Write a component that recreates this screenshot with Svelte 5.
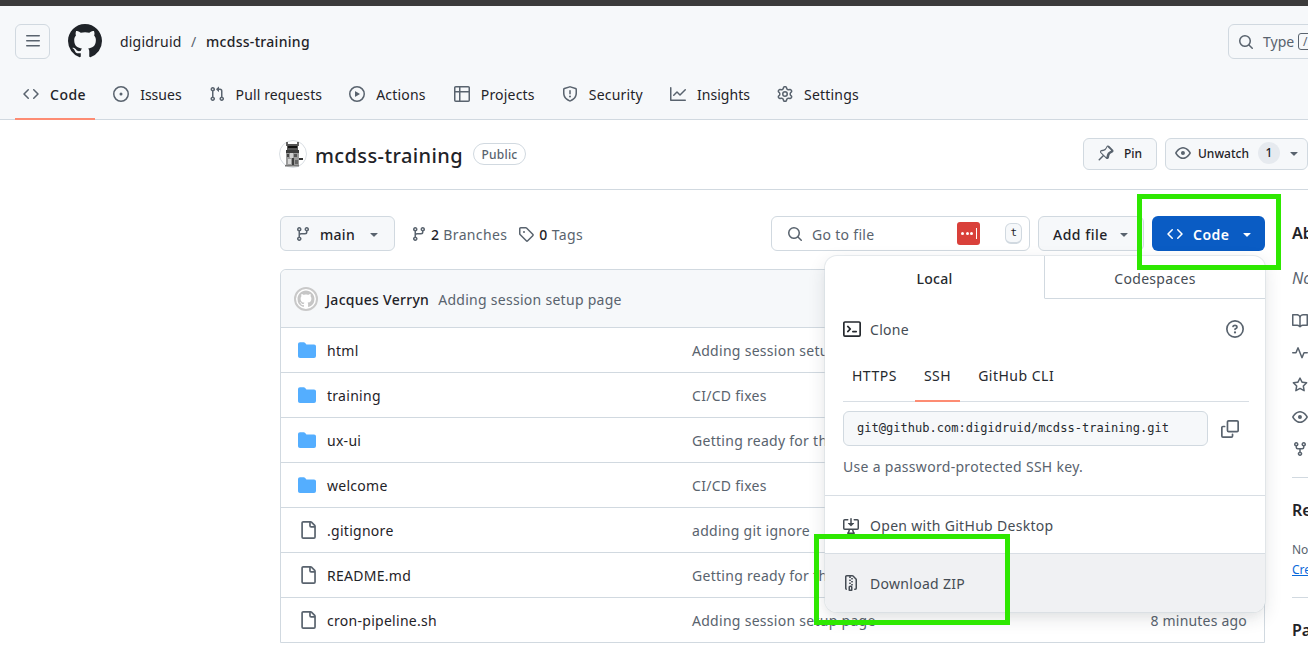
<script>
  const P = {
    bars: 'M1 2.75A.75.75 0 0 1 1.75 2h12.5a.75.75 0 0 1 0 1.5H1.75A.75.75 0 0 1 1 2.75Zm0 5A.75.75 0 0 1 1.75 7h12.5a.75.75 0 0 1 0 1.5H1.75A.75.75 0 0 1 1 7.75ZM1.75 12h12.5a.75.75 0 0 1 0 1.5H1.75a.75.75 0 0 1 0-1.5Z',
    mark: 'M8 0c4.42 0 8 3.58 8 8a8.013 8.013 0 0 1-5.45 7.59c-.4.08-.55-.17-.55-.38 0-.27.01-1.13.01-2.2 0-.75-.25-1.23-.54-1.48 1.78-.2 3.65-.88 3.65-3.95 0-.88-.31-1.59-.82-2.15.08-.2.36-1.02-.08-2.12 0 0-.67-.22-2.2.82-.64-.18-1.32-.27-2-.27-.68 0-1.36.09-2 .27-1.53-1.03-2.2-.82-2.2-.82-.44 1.1-.16 1.92-.08 2.12-.51.56-.82 1.28-.82 2.15 0 3.06 1.86 3.75 3.64 3.95-.23.2-.44.55-.51 1.07-.46.21-1.61.55-2.33-.66-.15-.24-.6-.83-1.23-.82-.67.01-.27.38.01.53.34.19.73.9.82 1.13.16.45.68 1.31 2.69.94 0 .67.01 1.3.01 1.49 0 .21-.15.45-.55.38A7.995 7.995 0 0 1 0 8c0-4.42 3.58-8 8-8Z',
    code: 'm11.28 3.22 4.25 4.25a.75.75 0 0 1 0 1.06l-4.25 4.25a.749.749 0 0 1-1.275-.326.749.749 0 0 1 .215-.734L13.94 8l-3.72-3.72a.749.749 0 0 1 .326-1.275.749.749 0 0 1 .734.215Zm-6.56 0a.751.751 0 0 1 1.042.018.751.751 0 0 1 .018 1.042L2.06 8l3.72 3.72a.749.749 0 0 1-.326 1.275.749.749 0 0 1-.734-.215L.47 8.53a.75.75 0 0 1 0-1.06Z',
    issue: 'M8 9.5a1.5 1.5 0 1 0 0-3 1.5 1.5 0 0 0 0 3Z M8 0a8 8 0 1 1 0 16A8 8 0 0 1 8 0ZM1.5 8a6.5 6.5 0 1 0 13 0 6.5 6.5 0 0 0-13 0Z',
    pr: 'M1.5 3.25a2.25 2.25 0 1 1 3 2.122v5.256a2.251 2.251 0 1 1-1.5 0V5.372A2.25 2.25 0 0 1 1.5 3.25Zm5.677-.177L9.573.677A.25.25 0 0 1 10 .854V2.5h1A2.5 2.5 0 0 1 13.5 5v5.628a2.251 2.251 0 1 1-1.5 0V5a1 1 0 0 0-1-1h-1v1.646a.25.25 0 0 1-.427.177L7.177 3.427a.25.25 0 0 1 0-.354ZM3.75 2.5a.75.75 0 1 0 0 1.5.75.75 0 0 0 0-1.5Zm0 9.5a.75.75 0 1 0 0 1.5.75.75 0 0 0 0-1.5Zm8.25.75a.75.75 0 1 0 1.5 0 .75.75 0 0 0-1.5 0Z',
    play: 'M8 0a8 8 0 1 1 0 16A8 8 0 0 1 8 0ZM1.5 8a6.5 6.5 0 1 0 13 0 6.5 6.5 0 0 0-13 0Zm4.879-2.773 4.264 2.559a.25.25 0 0 1 0 .428l-4.264 2.559A.25.25 0 0 1 6 10.559V5.442a.25.25 0 0 1 .379-.215Z',
    table: 'M0 1.75C0 .784.784 0 1.75 0h12.5C15.216 0 16 .784 16 1.75v12.5A1.75 1.75 0 0 1 14.25 16H1.75A1.75 1.75 0 0 1 0 14.25ZM6.5 6.5v8h7.75a.25.25 0 0 0 .25-.25V6.5Zm8-1.5V1.75a.25.25 0 0 0-.25-.25H6.5V5Zm-13 1.5v7.75c0 .138.112.25.25.25H5v-8ZM5 5V1.5H1.75a.25.25 0 0 0-.25.25V5Z',
    shield: 'M7.467.133a1.748 1.748 0 0 1 1.066 0l5.25 1.68A1.75 1.75 0 0 1 15 3.48V7c0 1.566-.32 3.182-1.303 4.682-.983 1.498-2.585 2.813-5.032 3.855a1.697 1.697 0 0 1-1.33 0c-2.447-1.042-4.049-2.357-5.032-3.855C1.32 10.182 1 8.566 1 7V3.48a1.75 1.75 0 0 1 1.217-1.667Zm.61 1.429a.25.25 0 0 0-.153 0l-5.25 1.68a.25.25 0 0 0-.174.238V7c0 1.358.275 2.666 1.057 3.86.784 1.194 2.121 2.34 4.366 3.297a.196.196 0 0 0 .154 0c2.245-.956 3.582-2.104 4.366-3.298C13.225 9.666 13.5 8.36 13.5 7V3.48a.251.251 0 0 0-.174-.237l-5.25-1.68ZM8.75 4.75v3a.75.75 0 0 1-1.5 0v-3a.75.75 0 0 1 1.5 0ZM9 10.5a1 1 0 1 1-2 0 1 1 0 0 1 2 0Z',
    graph: 'M1.5 1.75V13.5h13.75a.75.75 0 0 1 0 1.5H.75a.75.75 0 0 1-.75-.75V1.75a.75.75 0 0 1 1.5 0Zm14.28 2.53-5.25 5.25a.75.75 0 0 1-1.06 0L7 7.06 4.28 9.78a.751.751 0 0 1-1.042-.018.751.751 0 0 1-.018-1.042l3.25-3.25a.75.75 0 0 1 1.06 0L10 7.94l4.72-4.72a.751.751 0 0 1 1.042.018.751.751 0 0 1 .018 1.042Z',
    gear: 'M8 0a8.2 8.2 0 0 1 .701.031C9.444.095 9.99.645 10.16 1.29l.288 1.107c.018.066.079.158.212.224.231.114.454.243.668.386.123.082.233.09.299.071l1.103-.303c.644-.176 1.392.021 1.82.63.27.385.506.792.704 1.218.315.675.111 1.422-.364 1.891l-.814.806c-.049.048-.098.147-.088.294.016.257.016.515 0 .772-.01.147.038.246.088.294l.814.806c.475.469.679 1.216.364 1.891a7.977 7.977 0 0 1-.704 1.217c-.428.61-1.176.807-1.82.63l-1.102-.302c-.067-.019-.177-.011-.3.071a5.909 5.909 0 0 1-.668.386c-.133.066-.194.158-.211.224l-.29 1.106c-.168.646-.715 1.196-1.458 1.26a8.006 8.006 0 0 1-1.402 0c-.743-.064-1.289-.614-1.458-1.26l-.289-1.106c-.018-.066-.079-.158-.212-.224a5.738 5.738 0 0 1-.668-.386c-.123-.082-.233-.09-.299-.071l-1.103.303c-.644.176-1.392-.021-1.82-.63a8.12 8.12 0 0 1-.704-1.218c-.315-.675-.111-1.422.363-1.891l.815-.806c.05-.048.098-.147.088-.294a6.214 6.214 0 0 1 0-.772c.01-.147-.038-.246-.088-.294l-.815-.806C.635 6.045.431 5.298.746 4.623a7.92 7.92 0 0 1 .704-1.217c.428-.61 1.176-.807 1.82-.63l1.102.302c.067.019.177.011.3-.071.214-.143.437-.272.668-.386.133-.066.194-.158.211-.224l.29-1.106C6.009.645 6.556.095 7.299.03 7.53.01 7.764 0 8 0Zm-.571 1.525c-.036.003-.108.036-.137.146l-.289 1.105c-.147.561-.549.967-.998 1.189-.173.086-.34.183-.5.29-.417.278-.97.423-1.529.27l-1.103-.303c-.109-.03-.175.016-.195.045-.22.312-.412.644-.573.99-.014.031-.021.11.059.19l.815.806c.411.406.562.957.53 1.456a4.709 4.709 0 0 0 0 .582c.032.499-.119 1.05-.53 1.456l-.815.806c-.081.08-.073.159-.059.19.162.346.353.677.573.989.02.03.085.076.195.046l1.102-.303c.56-.153 1.113-.008 1.53.27.161.107.328.204.501.29.447.222.85.629.997 1.189l.289 1.105c.029.109.101.143.137.146a6.6 6.6 0 0 0 1.142 0c.036-.003.108-.036.137-.146l.289-1.105c.147-.561.549-.967.998-1.189.173-.086.34-.183.5-.29.417-.278.97-.423 1.529-.27l1.103.303c.109.029.175-.016.195-.045.22-.313.411-.644.573-.99.014-.031.021-.11-.059-.19l-.815-.806c-.411-.406-.562-.957-.53-1.456a4.709 4.709 0 0 0 0-.582c-.032-.499.119-1.05.53-1.456l.815-.806c.081-.08.073-.159.059-.19a6.464 6.464 0 0 0-.573-.989c-.02-.03-.085-.076-.195-.046l-1.102.303c-.56.153-1.113.008-1.53-.27a4.44 4.44 0 0 0-.501-.29c-.447-.222-.85-.629-.997-1.189l-.289-1.105c-.029-.11-.101-.143-.137-.146a6.6 6.6 0 0 0-1.142 0ZM11 8a3 3 0 1 1-6 0 3 3 0 0 1 6 0ZM9.5 8a1.5 1.5 0 1 0-3.001.001A1.5 1.5 0 0 0 9.5 8Z',
    search: 'M10.68 11.74a6 6 0 0 1-7.922-8.982 6 6 0 0 1 8.982 7.922l3.04 3.04a.749.749 0 0 1-.326 1.275.749.749 0 0 1-.734-.215ZM11.5 7a4.499 4.499 0 1 0-8.997 0A4.499 4.499 0 0 0 11.5 7Z',
    pin: 'm11.294.984 3.722 3.722a1.75 1.75 0 0 1-.504 2.826l-1.327.613a3.089 3.089 0 0 0-1.707 2.084l-.584 2.454c-.317 1.332-1.972 1.8-2.94.832L5.75 11.311 1.78 15.28a.749.749 0 0 1-1.275-.326.749.749 0 0 1 .215-.734L4.69 10.25 2.487 8.048c-.968-.968-.5-2.623.832-2.94l2.454-.584a3.089 3.089 0 0 0 2.084-1.707l.613-1.327a1.75 1.75 0 0 1 2.824-.506Zm-2.08 1.135-.613 1.327a4.587 4.587 0 0 1-3.096 2.537l-2.454.584a.25.25 0 0 0-.118.42l5.07 5.07a.25.25 0 0 0 .42-.118l.584-2.454a4.587 4.587 0 0 1 2.537-3.096l1.327-.613a.25.25 0 0 0 .072-.404l-3.722-3.722a.25.25 0 0 0-.427.07Z',
    eye: 'M8 2c1.981 0 3.671.992 4.933 2.078 1.27 1.091 2.187 2.345 2.637 3.023a1.62 1.62 0 0 1 0 1.798c-.45.678-1.367 1.932-2.637 3.023C11.67 13.008 9.981 14 8 14c-1.981 0-3.671-.992-4.933-2.078C1.797 10.83.88 9.576.43 8.898a1.62 1.62 0 0 1 0-1.798c.45-.677 1.367-1.931 2.637-3.022C4.33 2.992 6.019 2 8 2ZM1.679 7.932a.12.12 0 0 0 0 .136c.411.622 1.241 1.75 2.366 2.717C5.176 11.758 6.527 12.5 8 12.5c1.473 0 2.825-.742 3.955-1.715 1.124-.967 1.954-2.096 2.366-2.717a.12.12 0 0 0 0-.136c-.412-.621-1.242-1.75-2.366-2.717C10.824 4.242 9.473 3.5 8 3.5c-1.473 0-2.825.742-3.955 1.715-1.124.967-1.954 2.096-2.366 2.717ZM8 10a2 2 0 1 1-.001-3.999A2 2 0 0 1 8 10Z',
    branch: 'M9.5 3.25a2.25 2.25 0 1 1 3 2.122V6A2.5 2.5 0 0 1 10 8.5H6a1 1 0 0 0-1 1v1.128a2.251 2.251 0 1 1-1.5 0V5.372a2.25 2.25 0 1 1 1.5 0v1.836A2.493 2.493 0 0 1 6 7h4a1 1 0 0 0 1-1v-.628A2.25 2.25 0 0 1 9.5 3.25Zm-6 0a.75.75 0 1 0 1.5 0 .75.75 0 0 0-1.5 0Zm8.25-.75a.75.75 0 1 0 0 1.5.75.75 0 0 0 0-1.5ZM4.25 12a.75.75 0 1 0 0 1.5.75.75 0 0 0 0-1.5Z',
    tag: 'M1 7.775V2.75C1 1.784 1.784 1 2.75 1h5.025c.464 0 .91.184 1.238.513l6.25 6.25a1.75 1.75 0 0 1 0 2.474l-5.026 5.026a1.75 1.75 0 0 1-2.474 0l-6.25-6.25A1.752 1.752 0 0 1 1 7.775Zm1.5 0c0 .066.026.13.073.177l6.25 6.25a.25.25 0 0 0 .354 0l5.025-5.025a.25.25 0 0 0 0-.354l-6.25-6.25a.25.25 0 0 0-.177-.073H2.75a.25.25 0 0 0-.25.25ZM6 5a1 1 0 1 1 0 2 1 1 0 0 1 0-2Z',
    caret: 'm4.427 7.427 3.396 3.396a.25.25 0 0 0 .354 0l3.396-3.396A.25.25 0 0 0 11.396 7H4.604a.25.25 0 0 0-.177.427Z',
    folder: 'M1.75 1A1.75 1.75 0 0 0 0 2.75v10.5C0 14.216.784 15 1.75 15h12.5A1.75 1.75 0 0 0 16 13.25v-8.5A1.75 1.75 0 0 0 14.25 3H7.5a.25.25 0 0 1-.2-.1l-.9-1.2C6.07 1.26 5.55 1 5 1H1.75Z',
    file: 'M2 1.75C2 .784 2.784 0 3.75 0h6.586c.464 0 .909.184 1.237.513l2.914 2.914c.329.328.513.773.513 1.237v9.586A1.75 1.75 0 0 1 13.25 16h-9.5A1.75 1.75 0 0 1 2 14.25Zm1.75-.25a.25.25 0 0 0-.25.25v12.5c0 .138.112.25.25.25h9.5a.25.25 0 0 0 .25-.25V6h-2.75A1.75 1.75 0 0 1 9 4.25V1.5Zm6.75.062V4.25c0 .138.112.25.25.25h2.688l-.011-.013-2.914-2.914-.013-.011Z',
    terminal: 'M0 2.75C0 1.784.784 1 1.75 1h12.5c.966 0 1.75.784 1.75 1.75v10.5A1.75 1.75 0 0 1 14.25 15H1.75A1.75 1.75 0 0 1 0 13.25Zm1.75-.25a.25.25 0 0 0-.25.25v10.5c0 .138.112.25.25.25h12.5a.25.25 0 0 0 .25-.25V2.75a.25.25 0 0 0-.25-.25ZM7.25 8a.749.749 0 0 1-.22.53l-2.25 2.25a.749.749 0 0 1-1.275-.326.749.749 0 0 1 .215-.734L5.44 8 3.72 6.28a.749.749 0 0 1 .326-1.275.749.749 0 0 1 .734.215l2.25 2.25c.141.14.22.331.22.53Zm1.5 1.5h3a.75.75 0 0 1 0 1.5h-3a.75.75 0 0 1 0-1.5Z',
    question: 'M0 8a8 8 0 1 1 16 0A8 8 0 0 1 0 8Zm8-6.5a6.5 6.5 0 1 0 0 13 6.5 6.5 0 0 0 0-13ZM6.92 6.085h.001a.749.749 0 1 1-1.342-.67c.169-.339.436-.701.849-.977C6.845 4.16 7.369 4 8 4a2.756 2.756 0 0 1 1.637.525c.503.377.863.965.863 1.725 0 .448-.115.83-.329 1.15-.205.307-.47.513-.692.662-.109.072-.22.138-.313.195l-.006.004a6.24 6.24 0 0 0-.26.16.952.952 0 0 0-.276.245.75.75 0 0 1-1.248-.832c.184-.264.42-.489.692-.661.103-.067.207-.132.313-.195l.007-.004c.1-.061.182-.11.258-.161a.969.969 0 0 0 .277-.245C8.96 6.514 9 6.427 9 6.25a.612.612 0 0 0-.262-.525A1.27 1.27 0 0 0 8 5.5c-.369 0-.595.09-.74.187a1.01 1.01 0 0 0-.34.398ZM9 11a1 1 0 1 1-2 0 1 1 0 0 1 2 0Z',
    copy: 'M0 6.75C0 5.784.784 5 1.75 5h1.5a.75.75 0 0 1 0 1.5h-1.5a.25.25 0 0 0-.25.25v7.5c0 .138.112.25.25.25h7.5a.25.25 0 0 0 .25-.25v-1.5a.75.75 0 0 1 1.5 0v1.5A1.75 1.75 0 0 1 9.25 16h-7.5A1.75 1.75 0 0 1 0 14.25Z M5 1.75C5 .784 5.784 0 6.75 0h7.5C15.216 0 16 .784 16 1.75v7.5A1.75 1.75 0 0 1 14.25 11h-7.5A1.75 1.75 0 0 1 5 9.25Zm1.75-.25a.25.25 0 0 0-.25.25v7.5c0 .138.112.25.25.25h7.5a.25.25 0 0 0 .25-.25v-7.5a.25.25 0 0 0-.25-.25Z',
    desktop: 'm4.927 5.427 2.896 2.896a.25.25 0 0 0 .354 0l2.896-2.896A.25.25 0 0 0 10.896 5H8.75V.75a.75.75 0 1 0-1.5 0V5H5.104a.25.25 0 0 0-.177.427Z M1.573 2.573a.25.25 0 0 0-.073.177v7.5a.25.25 0 0 0 .25.25h12.5a.25.25 0 0 0 .25-.25v-7.5a.25.25 0 0 0-.25-.25h-3a.75.75 0 1 1 0-1.5h3A1.75 1.75 0 0 1 16 2.75v7.5A1.75 1.75 0 0 1 14.25 12h-3.727c.099 1.041.52 1.872 1.292 2.757A.75.75 0 0 1 11.25 16h-6.5a.75.75 0 0 1-.565-1.243c.772-.885 1.192-1.716 1.292-2.757H1.75A1.75 1.75 0 0 1 0 10.25v-7.5A1.75 1.75 0 0 1 1.75 1h3a.75.75 0 0 1 0 1.5h-3a.25.25 0 0 0-.177.073ZM6.982 12a5.72 5.72 0 0 1-.765 2.5h3.566a5.72 5.72 0 0 1-.765-2.5H6.982Z',
    zip: 'M3.5 1.75v11.5c0 .09.048.173.126.217a.75.75 0 0 1-.752 1.298A1.748 1.748 0 0 1 2 13.25V1.75C2 .784 2.784 0 3.75 0h5.586c.464 0 .909.185 1.237.513l2.914 2.914c.329.328.513.773.513 1.237v8.586A1.75 1.75 0 0 1 12.25 15h-.5a.75.75 0 0 1 0-1.5h.5a.25.25 0 0 0 .25-.25V4.664a.25.25 0 0 0-.073-.177L9.513 1.573a.25.25 0 0 0-.177-.073H7.25a.75.75 0 0 1 0 1.5h-.5a.75.75 0 0 1 0-1.5h-3a.25.25 0 0 0-.25.25Zm3.75 8.75h.5c.966 0 1.75.784 1.75 1.75v3a.75.75 0 0 1-.75.75h-2.5a.75.75 0 0 1-.75-.75v-3c0-.966.784-1.75 1.75-1.75ZM6 5.25a.75.75 0 0 1 .75-.75h.5a.75.75 0 0 1 0 1.5h-.5A.75.75 0 0 1 6 5.25Zm.75 2.25h.5a.75.75 0 0 1 0 1.5h-.5a.75.75 0 0 1 0-1.5ZM8 6.75A.75.75 0 0 1 8.75 6h.5a.75.75 0 0 1 0 1.5h-.5A.75.75 0 0 1 8 6.75ZM8.75 3h.5a.75.75 0 0 1 0 1.5h-.5a.75.75 0 0 1 0-1.5ZM8 9.75A.75.75 0 0 1 8.75 9h.5a.75.75 0 0 1 0 1.5h-.5A.75.75 0 0 1 8 9.75Zm-1 2.5v2.25h1v-2.25a.25.25 0 0 0-.25-.25h-.5a.25.25 0 0 0-.25.25Z',
    book: 'M0 1.75A.75.75 0 0 1 .75 1h4.253c1.227 0 2.317.59 3 1.501A3.743 3.743 0 0 1 11.006 1h4.245a.75.75 0 0 1 .75.75v10.5a.75.75 0 0 1-.75.75h-4.507a2.25 2.25 0 0 0-1.591.659l-.622.621a.75.75 0 0 1-1.06 0l-.622-.621A2.25 2.25 0 0 0 5.258 13H.75a.75.75 0 0 1-.75-.75Zm7.251 10.324.004-5.073-.002-2.253A2.25 2.25 0 0 0 5.003 2.5H1.5v9h3.757a3.75 3.75 0 0 1 1.994.574ZM8.755 4.75l-.004 7.322a3.752 3.752 0 0 1 1.992-.572H14.5v-9h-3.495a2.25 2.25 0 0 0-2.25 2.25Z',
    pulse: 'M6 2c.306 0 .582.187.696.471L10 10.731l1.304-3.26A.751.751 0 0 1 12 7h3.25a.75.75 0 0 1 0 1.5h-2.742l-1.812 4.528a.751.751 0 0 1-1.392 0L6 4.77 4.696 8.03A.75.75 0 0 1 4 8.5H.75a.75.75 0 0 1 0-1.5h2.742l1.812-4.529A.751.751 0 0 1 6 2Z',
    star: 'M8 .25a.75.75 0 0 1 .673.418l1.882 3.815 4.21.612a.75.75 0 0 1 .416 1.279l-3.046 2.97.719 4.192a.751.751 0 0 1-1.088.791L8 12.347l-3.766 1.98a.75.75 0 0 1-1.088-.79l.72-4.194L.818 6.374a.75.75 0 0 1 .416-1.28l4.21-.611L7.327.668A.75.75 0 0 1 8 .25Zm0 2.445L6.615 5.5a.75.75 0 0 1-.564.41l-3.097.45 2.24 2.184a.75.75 0 0 1 .216.664l-.528 3.084 2.769-1.456a.75.75 0 0 1 .698 0l2.77 1.456-.53-3.084a.75.75 0 0 1 .216-.664l2.24-2.183-3.096-.45a.75.75 0 0 1-.564-.41L8 2.694Z',
    fork: 'M5 5.372v.878c0 .414.336.75.75.75h4.5a.75.75 0 0 0 .75-.75v-.878a2.25 2.25 0 1 1 1.5 0v.878a2.25 2.25 0 0 1-2.25 2.25h-1.5v2.128a2.251 2.251 0 1 1-1.5 0V8.5h-1.5A2.25 2.25 0 0 1 3.5 6.25v-.878a2.25 2.25 0 1 1 1.5 0ZM5 3.25a.75.75 0 1 0-1.5 0 .75.75 0 0 0 1.5 0Zm6.75.75a.75.75 0 1 0 0-1.5.75.75 0 0 0 0 1.5Zm-3 8.75a.75.75 0 1 0-1.5 0 .75.75 0 0 0 1.5 0Z'
  };

  const tabs = [
    { icon: 'code', label: 'Code', current: true },
    { icon: 'issue', label: 'Issues' },
    { icon: 'pr', label: 'Pull requests' },
    { icon: 'play', label: 'Actions' },
    { icon: 'table', label: 'Projects' },
    { icon: 'shield', label: 'Security' },
    { icon: 'graph', label: 'Insights' },
    { icon: 'gear', label: 'Settings' }
  ];

  const rows = [
    { kind: 'folder', name: 'html', msg: 'Adding session setup page', time: '' },
    { kind: 'folder', name: 'training', msg: 'CI/CD fixes', time: '' },
    { kind: 'folder', name: 'ux-ui', msg: 'Getting ready for the', time: '' },
    { kind: 'folder', name: 'welcome', msg: 'CI/CD fixes', time: '' },
    { kind: 'file', name: '.gitignore', msg: 'adding git ignore', time: '' },
    { kind: 'file', name: 'README.md', msg: 'Getting ready for the', time: '' },
    { kind: 'file', name: 'cron-pipeline.sh', msg: 'Adding session setup page', time: '8 minutes ago' }
  ];

  const side = ['book', 'pulse', 'star', 'eye', 'fork'];
</script>

{#snippet icon(name, size = 16, cls = '')}
  <svg class="oct {cls}" width={size} height={size} viewBox="0 0 16 16" aria-hidden="true"><path d={P[name]} /></svg>
{/snippet}

<div class="page">
  <div class="topstrip"></div>
  <header class="header">
    <div class="toprow">
      <button class="squarebtn">{@render icon('bars')}</button>
      <span class="logo">{@render icon('mark', 34)}</span>
      <nav class="crumbs">
        <span class="owner">digidruid</span>
        <span class="slash">/</span>
        <span class="repo">mcdss-training</span>
      </nav>
      <div class="globalsearch">
        {@render icon('search')}
        <span class="gs-text">Type</span>
        <span class="gs-key">/</span>
      </div>
    </div>
    <nav class="tabs">
      {#each tabs as t}
        <a class="tab" class:current={t.current} href="#top">
          {@render icon(t.icon)}
          <span>{t.label}</span>
        </a>
      {/each}
    </nav>
  </header>

  <main class="main">
    <div class="repohead">
      <div class="repotitle">
        <svg class="avatar" width="28" height="28" viewBox="0 0 28 28" aria-hidden="true">
          <circle cx="14" cy="14" r="13.5" fill="#fff" stroke="#d9dee3" />
          <rect x="7" y="2" width="2" height="4" fill="#666" />
          <rect x="18" y="2" width="2" height="4" fill="#666" />
          <rect x="8" y="4" width="11" height="6" fill="#555" />
          <rect x="9" y="6" width="9" height="2" fill="#111" />
          <rect x="7" y="10" width="13" height="3" fill="#3c3c3c" />
          <rect x="7" y="13" width="13" height="12" fill="#9a9a9a" />
          <rect x="8" y="14" width="2" height="3" fill="#444" />
          <rect x="11" y="13" width="3" height="5" fill="#cfcfcf" />
          <rect x="15" y="14" width="3" height="3" fill="#555" />
          <rect x="9" y="19" width="3" height="5" fill="#d6d6d6" />
          <rect x="13" y="18" width="2" height="7" fill="#3f3f3f" />
          <rect x="16" y="20" width="3" height="4" fill="#666" />
          <rect x="20" y="18" width="4" height="2" fill="#333" />
          <rect x="6" y="25" width="14" height="1.5" fill="#777" />
        </svg>
        <h1>mcdss-training</h1>
        <span class="badge">Public</span>
      </div>
      <div class="repoactions">
        <button class="btn small pin">{@render icon('pin')}<span>Pin</span></button>
        <button class="btn small watch">
          {@render icon('eye')}<span>Unwatch</span><span class="counter">1</span>{@render icon('caret')}
        </button>
      </div>
    </div>

    <div class="columns">
      <section class="primary">
        <div class="toolbar">
          <button class="btn branchbtn">{@render icon('branch')}<b>main</b>{@render icon('caret')}</button>
          <span class="meta first">{@render icon('branch')}<span><b>2</b> Branches</span></span>
          <span class="meta">{@render icon('tag')}<span><b>0</b> Tags</span></span>
          <div class="filesearch">
            {@render icon('search')}
            <span class="fs-text">Go to file</span>
            <span class="lastpass"><i></i><i></i><i></i><em></em></span>
            <span class="fs-key">t</span>
          </div>
          <button class="btn addfile"><b>Add file</b>{@render icon('caret')}</button>
          <div class="codewrap">
            <button class="codebtn">{@render icon('code')}<b>Code</b>{@render icon('caret')}</button>
            <div class="popover">
              <div class="poptabs">
                <span class="poptab active">Local</span>
                <span class="poptab">Codespaces</span>
              </div>
              <div class="clone">
                <div class="clonehead">
                  <span class="clonetitle">{@render icon('terminal')}Clone</span>
                  {@render icon('question')}
                </div>
                <div class="protos">
                  <span>HTTPS</span>
                  <span class="on">SSH</span>
                  <span>GitHub CLI</span>
                </div>
                <div class="urlrow">
                  <div class="url">git@github.com:digidruid/mcdss-training.git</div>
                  {@render icon('copy')}
                </div>
                <p class="hint">Use a password-protected SSH key.</p>
              </div>
              <div class="popitem">{@render icon('desktop')}<span>Open with GitHub Desktop</span></div>
              <div class="popitem zipitem">{@render icon('zip')}<span>Download ZIP</span></div>
            </div>
          </div>
        </div>

        <div class="filetable">
          <div class="commit">
            <svg class="commitavatar" width="24" height="24" viewBox="0 0 24 24" aria-hidden="true">
              <circle cx="12" cy="12" r="11" fill="#fff" stroke="#c9c9c9" stroke-width="2" />
              <g transform="translate(3.5 3.5) scale(1.06)" fill="#c6c6c6"><path d={P.mark} /></g>
            </svg>
            <b>Jacques Verryn</b>
            <span>Adding session setup page</span>
          </div>
          {#each rows as r}
            <div class="row">
              <span class="rowicon">{@render icon(r.kind, 16, r.kind)}</span>
              <span class="rowname">{r.name}</span>
              <span class="rowmsg">{r.msg}</span>
              <span class="rowtime">{r.time}</span>
            </div>
          {/each}
        </div>
      </section>

      <aside class="sidebar">
        <h2>About</h2>
        <p class="nodesc">No description</p>
        <ul class="sidelist">
          {#each side as s}
            <li>{@render icon(s)}</li>
          {/each}
        </ul>
        <div class="sidesec">
          <h2>Releases</h2>
          <p class="noreleases">No releases<br /><a href="#top">Create a new release</a></p>
        </div>
        <div class="sidesec">
          <h2>Packages</h2>
        </div>
      </aside>
    </div>
  </main>

  <div class="mark markcode"></div>
  <div class="mark markzip"></div>
</div>

<style>
  :global(body) {
    margin: 0;
    background: #fff;
  }
  .page {
    position: relative;
    width: 1308px;
    height: 649px;
    overflow: hidden;
    font-family: "Noto Sans", "Liberation Sans", sans-serif;
    font-size: 14px;
    color: #1f2328;
    background: #fff;
  }
  .oct {
    display: block;
    flex: none;
    fill: #59636e;
  }
  button {
    font: inherit;
    color: inherit;
    cursor: pointer;
    margin: 0;
  }
  b {
    font-weight: 500;
  }
  .topstrip {
    height: 6px;
    background: #3b3b3b;
  }
  .header {
    background: #f6f8fa;
    border-bottom: 1px solid #d1d9e0;
    height: 113px;
    box-sizing: content-box;
  }
  .toprow {
    display: flex;
    align-items: center;
    height: 34px;
    padding: 18px 0 0 15px;
  }
  .squarebtn {
    width: 35px;
    height: 35px;
    display: grid;
    place-items: center;
    padding: 0;
    border: 1px solid #d1d9e0;
    border-radius: 6px;
    background: transparent;
  }
  .logo {
    margin-left: 18px;
  }
  .logo .oct {
    fill: #1f2328;
  }
  .crumbs {
    display: flex;
    align-items: center;
    margin-left: 18px;
    gap: 7px;
    letter-spacing: 0.2px;
  }
  .owner {
    color: #1f2328;
  }
  .slash {
    color: #59636e;
    padding: 0 2.5px;
  }
  .repo {
    font-weight: 500;
    letter-spacing: 0.3px;
  }
  .globalsearch {
    position: absolute;
    left: 1228px;
    top: 24px;
    width: 140px;
    height: 33px;
    display: flex;
    align-items: center;
    gap: 9px;
    padding-left: 9px;
    border: 1px solid #d1d9e0;
    border-radius: 6px;
    color: #59636e;
  }
  .gs-key {
    display: inline-block;
    width: 12px;
    height: 15px;
    margin-left: -5px;
    border: 1px solid #59636e;
    border-radius: 3px;
    font-size: 12px;
    line-height: 15px;
    text-align: center;
  }
  .tabs {
    display: flex;
    margin-top: 19px;
    padding-left: 15px;
    gap: 10px;
  }
  .tab {
    display: flex;
    align-items: center;
    gap: 11px;
    height: 43px;
    box-sizing: border-box;
    padding: 0 9px 7px 8px;
    color: #1f2328;
    text-decoration: none;
    letter-spacing: 0.2px;
    border-bottom: 2px solid transparent;
  }
  .tab.current {
    font-weight: 500;
    letter-spacing: 0.5px;
    border-bottom-color: #fd8c73;
  }
  .tab:nth-child(2) {
    letter-spacing: 0;
  }
  .tab:nth-child(3) {
    letter-spacing: 0.12px;
  }
  .tab:nth-child(5) {
    margin-left: 1px;
  }
  .tab:nth-child(7) {
    letter-spacing: 0.05px;
  }
  .main {
    padding-left: 280px;
  }
  .repohead {
    display: flex;
    justify-content: space-between;
    height: 70px;
    box-sizing: border-box;
    padding-top: 18px;
    border-bottom: 1px solid #d1d9e0;
  }
  .repotitle {
    display: flex;
    align-items: center;
    height: 32px;
    margin-left: -1px;
  }
  .repotitle h1 {
    margin: 0 0 0 8px;
    padding-top: 2px;
    font-size: 20px;
    font-weight: 500;
    letter-spacing: 0.4px;
  }
  .badge {
    margin-left: 10px;
    padding: 0 7.5px;
    height: 20px;
    line-height: 22px;
    border: 1px solid #d1d9e0;
    border-radius: 11px;
    font-size: 12px;
    font-weight: 500;
    color: #59636e;
    letter-spacing: 0.2px;
  }
  .repoactions {
    display: flex;
    gap: 8px;
    height: 32px;
  }
  .btn {
    display: flex;
    align-items: center;
    box-sizing: border-box;
    border: 1px solid #d1d9e0;
    border-radius: 6px;
    background: #f6f8fa;
    padding: 0;
    white-space: nowrap;
  }
  .btn.small {
    height: 32px;
    padding-bottom: 2px;
    font-size: 12px;
    font-weight: 500;
  }
  .pin {
    width: 74px;
    padding-left: 14px;
    gap: 10px;
  }
  .watch {
    width: 143px;
    padding-left: 9px;
    gap: 5px;
  }
  .watch .oct:first-child {
    margin-right: 2px;
  }
  .watch .oct:last-child {
    margin-left: 1px;
  }
  .counter {
    width: 22px;
    height: 22px;
    margin-left: 4px;
    line-height: 22px;
    text-align: center;
    border-radius: 11px;
    background: #e6eaef;
  }
  .columns {
    display: flex;
  }
  .primary {
    width: 985px;
    flex: none;
    padding-top: 26px;
  }
  .toolbar {
    display: flex;
    align-items: center;
    height: 35px;
  }
  .branchbtn {
    width: 115px;
    height: 35px;
    padding: 2px 0 0 14px;
    gap: 9px;
    letter-spacing: 0.3px;
  }
  .branchbtn .oct {
    margin-top: -2px;
  }
  .branchbtn .oct:last-child {
    margin-left: 2px;
  }
  .meta {
    display: flex;
    align-items: center;
    gap: 5px;
    margin-left: 11px;
    color: #59636e;
    letter-spacing: 0.4px;
  }
  .meta > span {
    padding-top: 2px;
  }
  .meta b {
    color: #1f2328;
  }
  .meta.first {
    margin-left: 16px;
    gap: 4px;
    letter-spacing: 0.35px;
  }
  .filesearch {
    display: flex;
    align-items: center;
    box-sizing: border-box;
    width: 259px;
    height: 35px;
    margin-left: auto;
    padding-left: 15px;
    border: 1px solid #d1d9e0;
    border-radius: 6px;
    color: #59636e;
    letter-spacing: 0.3px;
    background: #fff;
  }
  .fs-text {
    margin-left: 9px;
    padding-top: 2px;
  }
  .lastpass {
    display: flex;
    align-items: center;
    justify-content: center;
    gap: 1.5px;
    width: 23px;
    height: 23px;
    margin-left: 83px;
    border-radius: 3px;
    background: #d9403a;
  }
  .lastpass i {
    width: 3px;
    height: 3px;
    border-radius: 50%;
    background: #fff;
  }
  .lastpass em {
    width: 1px;
    height: 11px;
    margin-left: 1px;
    background: #fff;
  }
  .fs-key {
    width: 17px;
    height: 21px;
    margin-left: 25px;
    box-sizing: border-box;
    border: 1px solid #d1d9e0;
    border-bottom-width: 2px;
    border-radius: 6px;
    font-family: "DejaVu Sans Mono", monospace;
    font-size: 11px;
    line-height: 17px;
    text-align: center;
    color: #1f2328;
    background: #f6f8fa;
  }
  .addfile {
    width: 106px;
    height: 35px;
    margin-left: 8px;
    padding: 2px 0 0 14px;
    gap: 8px;
    letter-spacing: 0.5px;
  }
  .addfile .oct {
    margin-top: -2px;
  }
  .codewrap {
    position: relative;
    margin-left: 8px;
  }
  .codebtn {
    display: flex;
    align-items: center;
    width: 113px;
    height: 35px;
    padding: 2px 0 0 15px;
    gap: 10px;
    border: 0;
    border-radius: 6px;
    background: #0a5cc4;
    color: #fff;
    letter-spacing: 0.5px;
  }
  .codebtn b {
    font-weight: 600;
  }
  .codebtn .oct {
    margin-top: -2px;
    fill: #fff;
  }
  .codebtn .oct:last-child {
    margin-left: -1px;
  }
  .popover {
    position: absolute;
    z-index: 5;
    right: 0;
    top: 40px;
    width: 440px;
    height: 356px;
    background: #fff;
    border-radius: 12px;
    box-shadow: 0 0 0 1px rgba(209, 217, 224, 0.5), 0 6px 12px -3px rgba(37, 41, 46, 0.04), 0 6px 18px rgba(37, 41, 46, 0.12);
    display: flex;
    flex-direction: column;
    color: #1f2328;
    letter-spacing: 0.3px;
  }
  .poptabs {
    display: flex;
    height: 43px;
    flex: none;
  }
  .poptab {
    flex: 1;
    display: flex;
    align-items: center;
    justify-content: center;
    box-sizing: border-box;
    color: #454c54;
    border-bottom: 1px solid #d1d9e0;
    padding-top: 3px;
  }
  .poptab.active {
    flex: none;
    width: 220px;
    font-weight: 500;
    color: #25292e;
    border-bottom-color: transparent;
    border-right: 1px solid #d1d9e0;
  }
  .clone {
    padding: 0 16px 0 18px;
    height: 196px;
    box-sizing: border-box;
    flex: none;
  }
  .clonehead {
    display: flex;
    align-items: center;
    justify-content: space-between;
    height: 32px;
    margin-top: 14px;
    padding-right: 5px;
  }
  .clonehead .oct {
    fill: #59636e;
    width: 18px;
    height: 18px;
  }
  .clonehead .clonetitle .oct {
    fill: #25292e;
  }
  .clonetitle {
    display: flex;
    align-items: center;
    gap: 9px;
    color: #454c54;
  }
  .protos {
    display: flex;
    margin-top: 10px;
    height: 47px;
    border-bottom: 1px solid #d8dee4;
    box-sizing: border-box;
  }
  .protos span {
    display: flex;
    align-items: center;
    height: 46px;
    box-sizing: border-box;
    padding: 0 9px 4px;
    margin-right: 9px;
    color: #25292e;
    letter-spacing: 0.5px;
    border-bottom: 2px solid transparent;
  }
  .protos span.on {
    border-bottom-color: #fd8c73;
    margin-bottom: -1px;
    height: 47px;
    padding-bottom: 5px;
  }
  .urlrow {
    display: flex;
    align-items: center;
    gap: 13px;
    margin-top: 9px;
  }
  .url {
    box-sizing: border-box;
    width: 365px;
    height: 35px;
    line-height: 33px;
    padding-left: 13px;
    border: 1px solid #d1d9e0;
    border-radius: 6px;
    background: #f6f8fa;
    font-family: "DejaVu Sans Mono", monospace;
    font-size: 12px;
    letter-spacing: 0.03px;
    color: #25292e;
  }
  .urlrow .oct {
    width: 18px;
    height: 18px;
  }
  .hint {
    margin: 11px 0 0;
    font-size: 14px;
    color: #59636e;
  }
  .popitem {
    display: flex;
    align-items: center;
    gap: 11px;
    height: 58px;
    box-sizing: border-box;
    padding: 2px 0 0 18px;
    border-top: 1px solid #d8dee4;
    color: #454c54;
  }
  .popitem .oct {
    fill: #454c54;
  }
  .zipitem {
    flex: 1;
    padding-top: 0;
    background: #f0f1f3;
    border-radius: 0 0 12px 12px;
  }
  .filetable {
    margin-top: 18px;
    border: 1px solid #d1d9e0;
    border-radius: 6px 6px 0 0;
    letter-spacing: 0.28px;
  }
  .commit {
    display: flex;
    align-items: center;
    height: 57px;
    padding-left: 13px;
    background: #f6f8fa;
    border-radius: 6px 6px 0 0;
    color: #59636e;
    gap: 8px;
  }
  .commit span,
  .commit b {
    padding-top: 2px;
  }
  .commit b {
    color: #1f2328;
    margin-right: 1px;
  }
  .row {
    display: flex;
    align-items: center;
    height: 44px;
    padding: 0 17px 0 17px;
    border-top: 1px solid #d1d9e0;
  }
  .rowicon {
    width: 29px;
    flex: none;
  }
  .oct.folder {
    fill: #54aeff;
    width: 18px;
    height: 18px;
  }
  .oct.file {
    fill: #59636e;
    width: 18px;
    height: 18px;
    margin-left: 1px;
  }
  .rowname {
    width: 365px;
    flex: none;
  }
  .rowmsg {
    color: #59636e;
    white-space: nowrap;
  }
  .rowtime {
    margin-left: auto;
    color: #59636e;
    letter-spacing: 0.2px;
  }
  .sidebar {
    margin-left: 27px;
    padding-top: 33px;
    width: 300px;
    flex: none;
  }
  .sidebar h2 {
    margin: 0;
    font-size: 16px;
    font-weight: 600;
    line-height: 20px;
  }
  .nodesc {
    margin: 25px 0 0;
    font-style: italic;
    color: #59636e;
    font-size: 16px;
    line-height: 20px;
  }
  .sidelist {
    list-style: none;
    padding: 0;
    margin: 17px 0 0;
  }
  .sidelist li {
    height: 32px;
    display: flex;
    align-items: center;
  }
  .sidesec {
    margin-top: 12px;
    padding-top: 22px;
    border-top: 1px solid #d1d9e0;
  }
  .sidesec + .sidesec {
    margin-top: 17px;
  }
  .noreleases {
    margin: 20px 0 0;
    font-size: 12px;
    line-height: 20px;
    color: #59636e;
  }
  .noreleases a {
    color: #0969da;
    text-decoration: underline;
  }
  .mark {
    position: absolute;
    z-index: 10;
    box-sizing: border-box;
    border: 5px solid #2ee800;
  }
  .markcode {
    left: 1137px;
    top: 194px;
    width: 144px;
    height: 76px;
  }
  .markzip {
    left: 814px;
    top: 534px;
    width: 196px;
    height: 91px;
  }
</style>
